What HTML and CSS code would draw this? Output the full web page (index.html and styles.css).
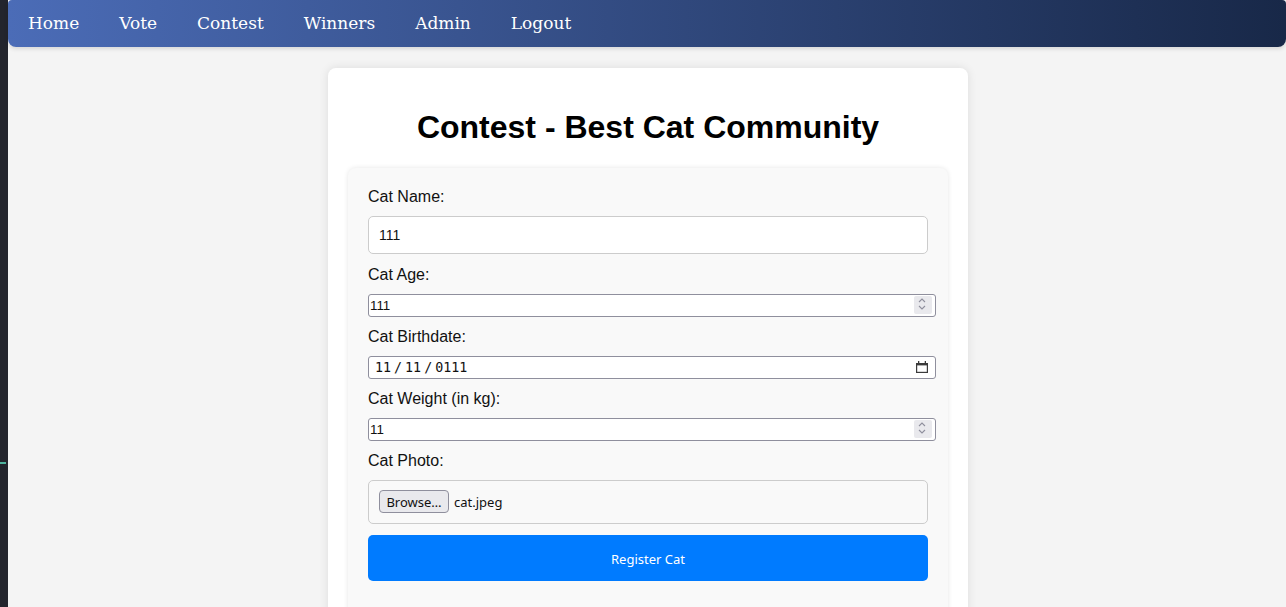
FILE: index.html
```html
<!DOCTYPE html>
<html lang="en">
<head>
<meta charset="utf-8">
<title>Contest - Best Cat Community</title>
<link rel="stylesheet" href="styles.css">
</head>
<body>
<div class="side"><span class="side-mark"></span></div>
<div class="page">
  <nav class="topnav">
    <a href="#">Home</a>
    <a href="#">Vote</a>
    <a href="#">Contest</a>
    <a href="#">Winners</a>
    <a href="#">Admin</a>
    <a href="#">Logout</a>
  </nav>
  <main class="card">
    <h1 class="title">Contest - Best Cat Community</h1>
    <form class="cat-form">
      <label class="field-label">Cat Name:</label>
      <input class="text-input" type="text" value="111">

      <label class="field-label">Cat Age:</label>
      <div class="ff-wrap">
        <input class="ff-input" type="text" value="111">
        <span class="spin"><svg viewBox="0 0 18 18" width="18" height="18"><polyline points="5,6 8,3 11,6" fill="none" stroke="#8f8f9d" stroke-width="1.1"/><polyline points="5,10 8,13 11,10" fill="none" stroke="#8f8f9d" stroke-width="1.1"/></svg></span>
      </div>

      <label class="field-label">Cat Birthdate:</label>
      <div class="ff-wrap">
        <div class="date-field"><span>11</span><span class="sep">/</span><span>11</span><span class="sep">/</span><span>0111</span></div>
        <span class="cal"><svg viewBox="0 0 12 12" width="12" height="12"><rect x="0.6" y="2.6" width="10.8" height="8.8" fill="none" stroke="#3b3b3b" stroke-width="1.2"/><rect x="0" y="2" width="12" height="2.4" fill="#3b3b3b"/><rect x="2" y="0" width="1.3" height="3" fill="#3b3b3b"/><rect x="8.7" y="0" width="1.3" height="3" fill="#3b3b3b"/></svg></span>
      </div>

      <label class="field-label">Cat Weight (in kg):</label>
      <div class="ff-wrap">
        <input class="ff-input" type="text" value="11">
        <span class="spin"><svg viewBox="0 0 18 18" width="18" height="18"><polyline points="5,6 8,3 11,6" fill="none" stroke="#8f8f9d" stroke-width="1.1"/><polyline points="5,10 8,13 11,10" fill="none" stroke="#8f8f9d" stroke-width="1.1"/></svg></span>
      </div>

      <label class="field-label">Cat Photo:</label>
      <div class="file-box">
        <button type="button" class="browse">Browse…</button>
        <span class="file-name">cat.jpeg</span>
      </div>

      <button type="button" class="submit">Register Cat</button>
    </form>
  </main>
</div>
</body>
</html>
```
FILE: styles.css
```css
html, body {
  margin: 0;
  padding: 0;
}
body {
  display: flex;
  min-height: 100vh;
  background: #f4f4f4;
  font-family: "Liberation Sans", Arial, sans-serif;
  overflow: hidden;
}
.side {
  flex: none;
  width: 8px;
  background: #23252d;
  display: flex;
  flex-direction: column;
}
.side-mark {
  display: block;
  width: 6px;
  height: 2px;
  margin-top: 462px;
  background: #4fb39e;
}
.page {
  flex: 1;
  min-width: 0;
}
.topnav {
  box-sizing: border-box;
  height: 47px;
  padding-bottom: 2px;
  display: flex;
  align-items: center;
  background: linear-gradient(to right, #4b6cb7, #182848);
  border-radius: 4px 4px 8px 8px;
  box-shadow: 0 2px 4px rgba(0, 0, 0, 0.12);
}
.topnav a {
  padding: 0 20px;
  color: #ffffff;
  text-decoration: none;
  font-family: "DejaVu Serif", serif;
  font-size: 17px;
}
.card {
  width: 600px;
  margin: 21px auto 0 calc(50% - 319px);
  padding: 20px;
  background: #ffffff;
  border-radius: 8px;
  box-shadow: 0 0 10px rgba(0, 0, 0, 0.1);
}
.title {
  margin: 21.44px 0;
  text-align: center;
  font-size: 32px;
  font-weight: bold;
  color: #000;
}
.cat-form {
  display: flex;
  flex-direction: column;
  align-items: flex-start;
  padding: 20px 20px 40px;
  background: #f9f9f9;
  border-radius: 8px;
  box-shadow: 0 0 5px rgba(0, 0, 0, 0.1);
}
.field-label {
  font-size: 16px;
  color: #111;
  margin-bottom: 10px;
}
.text-input {
  box-sizing: border-box;
  width: 100%;
  height: 38px;
  padding: 1px 10px 0;
  margin: 0 0 12px;
  border: 1px solid #cccccc;
  border-radius: 5px;
  background: #fff;
  font-family: "Liberation Sans", Arial, sans-serif;
  font-size: 14px;
  color: #111;
  outline: none;
}
.ff-wrap {
  position: relative;
  width: calc(100% + 8px);
  height: 23px;
  margin-bottom: 11px;
}
.ff-input {
  box-sizing: border-box;
  width: 100%;
  height: 23px;
  margin: 0;
  padding: 0 2px 0 1px;
  border: 1px solid #8f8f9d;
  border-radius: 3px;
  background: #fff;
  font-family: "Liberation Sans", Arial, sans-serif;
  font-size: 13.33px;
  color: #111;
  outline: none;
}
.spin {
  position: absolute;
  top: 2px;
  right: 4px;
  width: 18px;
  height: 18px;
  background: #e9e9ed;
  border-radius: 2px;
  display: flex;
}
.date-field {
  box-sizing: border-box;
  height: 23px;
  display: flex;
  align-items: center;
  padding-left: 6px;
  border: 1px solid #8f8f9d;
  border-radius: 3px;
  background: #fff;
  font-family: "DejaVu Sans Mono", monospace;
  font-size: 13.33px;
  color: #111;
}
.date-field .sep {
  margin: 0 3px;
}
.cal {
  position: absolute;
  top: 5px;
  right: 8px;
  width: 12px;
  height: 12px;
  display: flex;
}
.file-box {
  box-sizing: border-box;
  width: 100%;
  height: 44px;
  display: flex;
  align-items: center;
  padding: 0 10px;
  margin-bottom: 11px;
  border: 1px solid #cccccc;
  border-radius: 5px;
  background: #f9f9f9;
  font-family: "Noto Sans", sans-serif;
  font-size: 13px;
  color: #111;
}
.browse {
  box-sizing: border-box;
  width: 70px;
  height: 23px;
  padding: 0;
  border: 1px solid #8f8f9d;
  border-radius: 4px;
  background: #e9e9ed;
  font-family: "Noto Sans", sans-serif;
  font-size: 13px;
  color: #111;
}
.file-name {
  margin-left: 5px;
}
.submit {
  width: 100%;
  height: 46px;
  padding: 3px 0 0;
  border: none;
  border-radius: 5px;
  background: #007bff;
  color: #ffffff;
  font-family: "Noto Sans", sans-serif;
  font-size: 13px;
}
```
